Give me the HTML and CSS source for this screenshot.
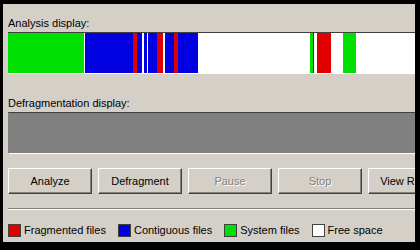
FILE: index.html
```html
<!DOCTYPE html>
<html lang="en">
<head>
	<meta charset="UTF-8">
	<title>Disk Defragmenter</title>
	<link rel="stylesheet" href="styles.css">
</head>
<body>
	<div class="panel">
		<div class="label">Analysis display:</div>
		<div class="bar analysis">
			<div class="seg sys" style="width:76px"></div>
			<div class="seg free" style="width:1px"></div>
			<div class="seg cont" style="width:48px"></div>
			<div class="seg frag" style="width:4px"></div>
			<div class="seg cont" style="width:5px"></div>
			<div class="seg free" style="width:2px"></div>
			<div class="seg cont" style="width:3px"></div>
			<div class="seg free" style="width:1px"></div>
			<div class="seg cont" style="width:9px"></div>
			<div class="seg frag" style="width:6px"></div>
			<div class="seg free" style="width:2px"></div>
			<div class="seg cont" style="width:9px"></div>
			<div class="seg frag" style="width:4px"></div>
			<div class="seg cont" style="width:20px"></div>
			<div class="seg free" style="width:112px"></div>
			<div class="seg sys" style="width:3px"></div>
			<div class="seg frag dark" style="width:1px"></div>
			<div class="seg free" style="width:3px"></div>
			<div class="seg frag" style="width:14px"></div>
			<div class="seg free" style="width:12px"></div>
			<div class="seg sys" style="width:13px"></div>
			<div class="seg free grow"></div>
		</div>

		<div class="label second">Defragmentation display:</div>
		<div class="bar defrag"></div>

		<div class="buttons">
			<button class="btn">Analyze</button>
			<button class="btn">Defragment</button>
			<button class="btn" disabled>Pause</button>
			<button class="btn" disabled>Stop</button>
			<button class="btn">View Report</button>
		</div>

		<div class="sep"></div>

		<ul class="legend">
			<li><span class="box frag"></span>Fragmented files</li>
			<li><span class="box cont"></span>Contiguous files</li>
			<li><span class="box sys"></span>System files</li>
			<li><span class="box free"></span>Free space</li>
		</ul>
	</div>
</body>
</html>
```
FILE: styles.css
```css
*{
	margin: 0;
	padding: 0;
	box-sizing: border-box;
	list-style-type: none;
}
body{
	background: #000;
	font-family: "Liberation Sans", Arial, sans-serif;
	font-size: 11px;
	line-height: 13px;
	color: #000;
}
.panel{
	width: 412px;
	height: 238px;
	margin: 4px 5px 8px 3px;
	padding: 13px 0 0 5px;
	background: #d4d0c8;
	overflow: hidden;
}
.label{
	margin-bottom: 2px;
	white-space: nowrap;
}
.label.second{
	margin-top: 23px;
}
.bar{
	width: 420px;
	height: 42px;
	border-top: 1px solid #404040;
	border-bottom: 1px solid #fff;
}
.analysis{
	display: flex;
	background: #fff;
}
.seg{
	height: 100%;
	flex: none;
}
.seg.grow{
	flex: 1;
}
.frag{ background: #e00000; }
.frag.dark{ background: #900000; }
.cont{ background: #0000e0; }
.sys{ background: #00e000; }
.free{ background: #fff; }
.defrag{
	background: #808080;
	border-left: 1px solid #808080;
}
.buttons{
	display: flex;
	gap: 6px;
	margin-top: 14px;
}
.btn{
	flex: none;
	width: 84px;
	height: 26px;
	background: #d4d0c8;
	font-family: "Liberation Sans", Arial, sans-serif;
	font-size: 11px;
	color: #000;
	white-space: nowrap;
	overflow: hidden;
	border: 1px solid;
	border-color: #fff #404040 #404040 #fff;
	box-shadow: inset -1px -1px #808080;
}
.btn:disabled{
	color: #808080;
	text-shadow: 1px 1px #fff;
}
.sep{
	margin-top: 14px;
	border-top: 1px solid #808080;
	border-bottom: 1px solid #fff;
}
.legend{
	display: flex;
	gap: 12px;
	margin-top: 14px;
	white-space: nowrap;
}
.legend li{
	display: flex;
	align-items: center;
	gap: 3px;
}
.box{
	width: 13px;
	height: 13px;
	border: 1px solid #404040;
}
```
